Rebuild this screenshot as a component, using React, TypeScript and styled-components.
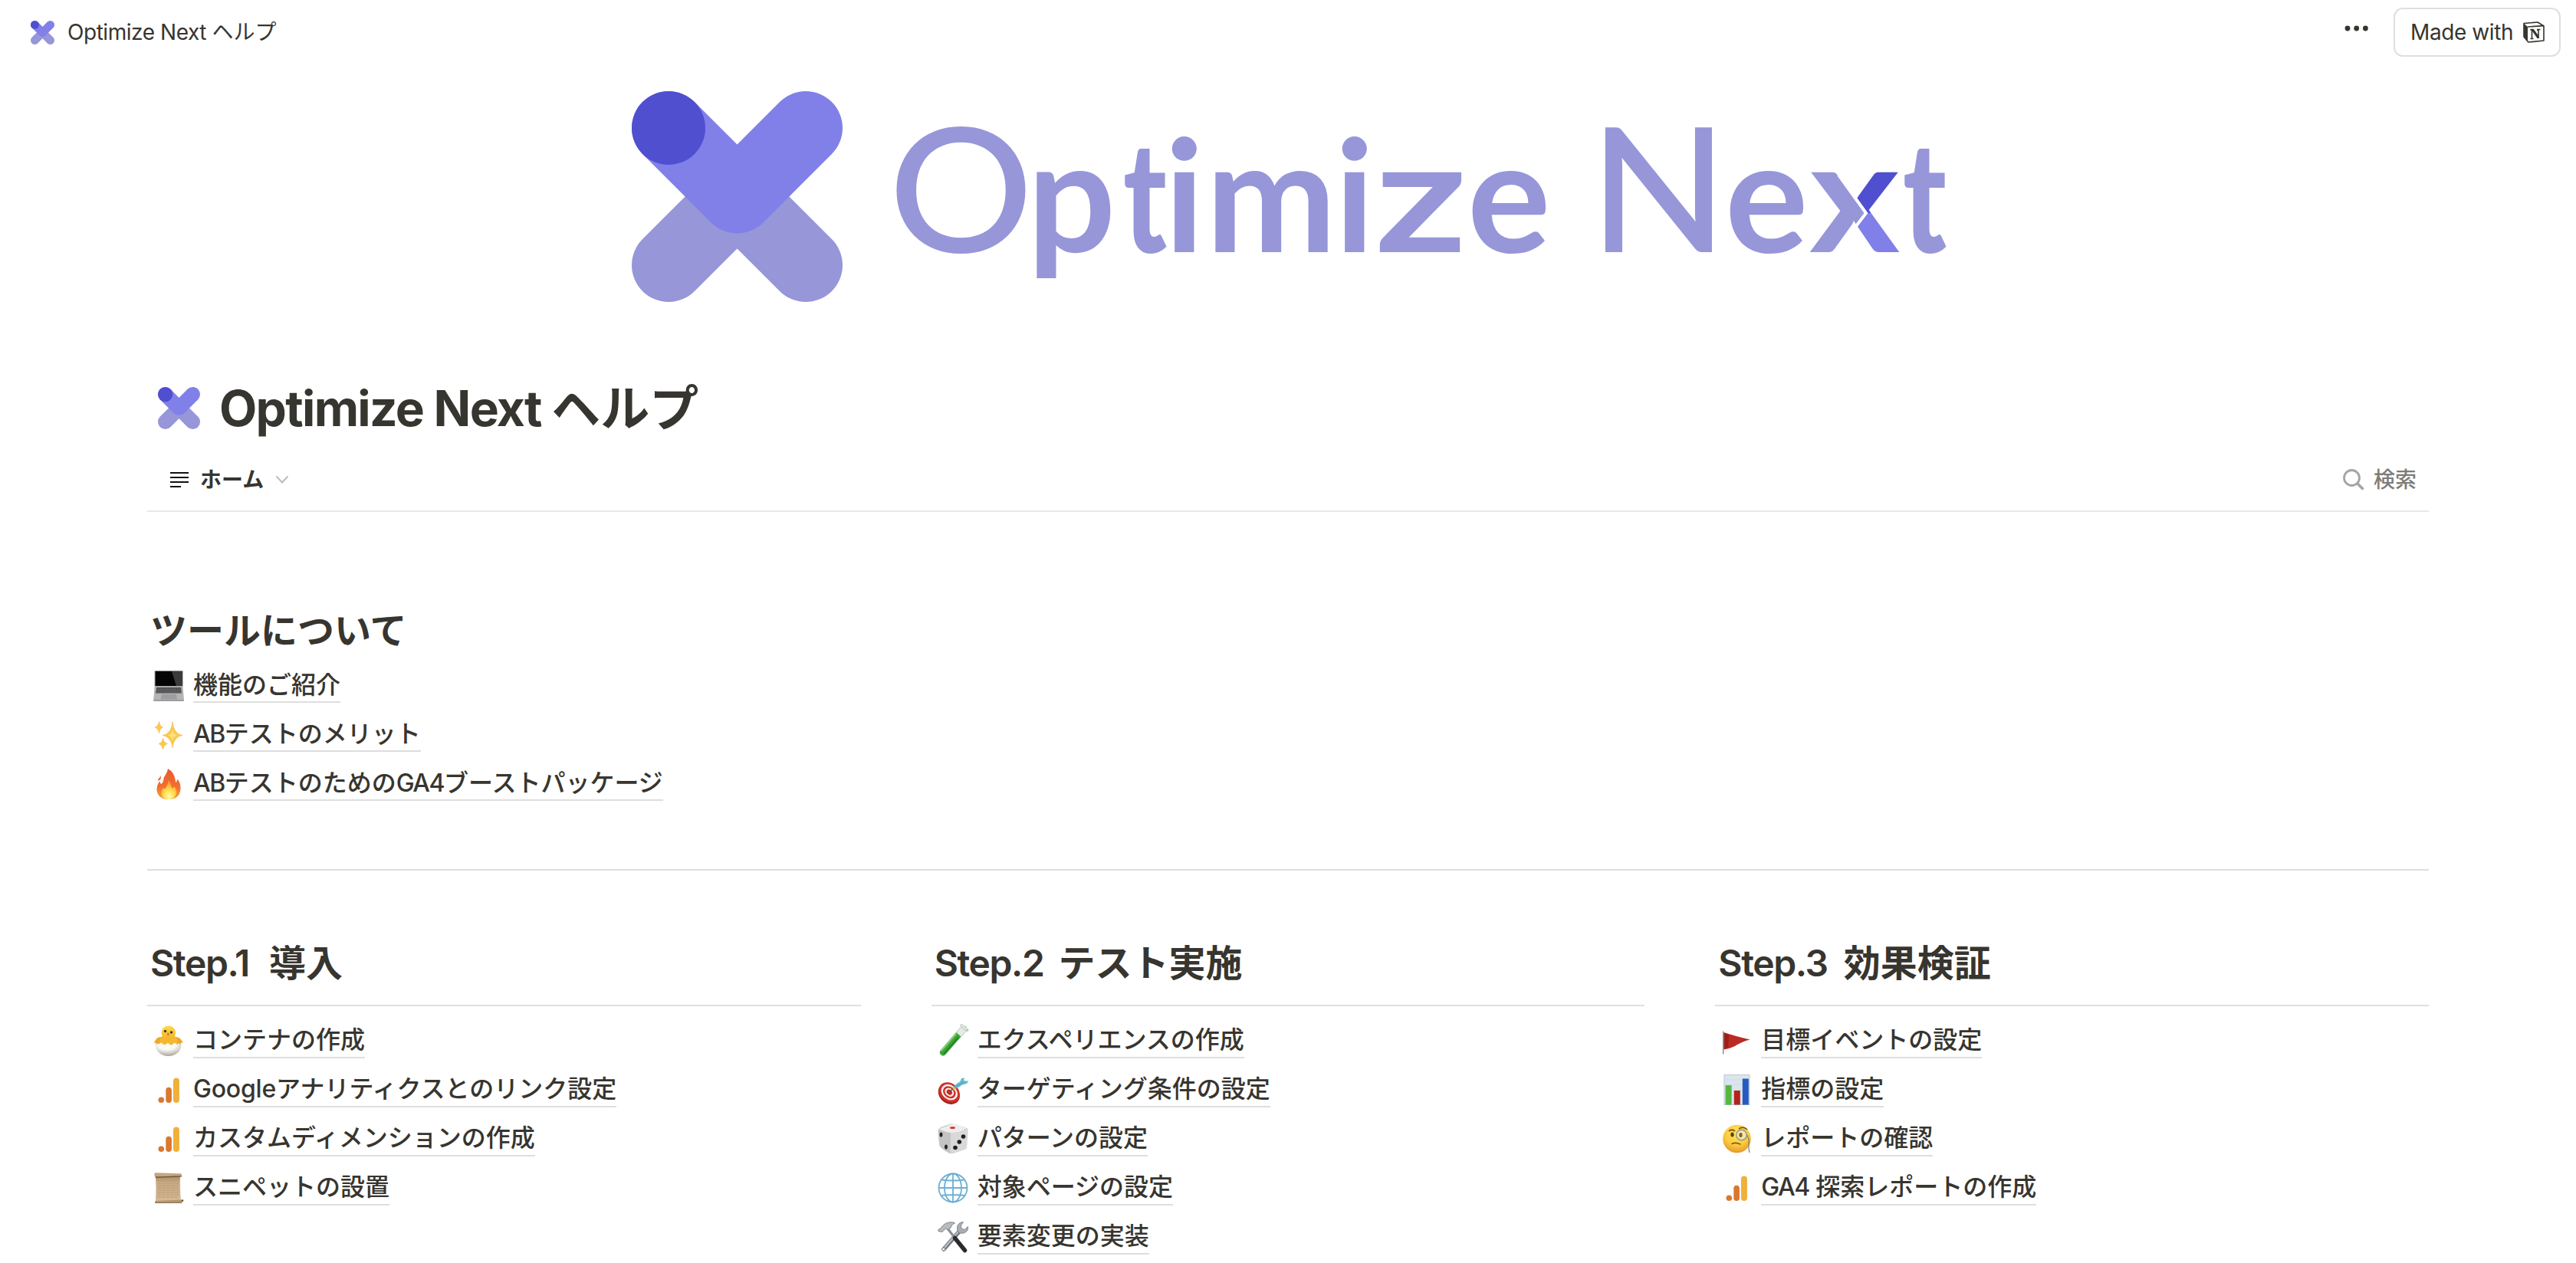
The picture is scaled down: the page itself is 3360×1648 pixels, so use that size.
import { ReactNode } from 'react'
import styled, { createGlobalStyle } from 'styled-components'

interface Item {
  icon: ReactNode,
  text: string
}

interface Step {
  title: string,
  label: string,
  gap: number,
  items: Item[]
}

const GlobalStyle = createGlobalStyle`
  body {
    margin: 0;
    background: #fff;
    color: #37352f;
    font-family: Inter, 'Noto Sans CJK JP', sans-serif;
    overflow: hidden;
  }
`

/* logos */

function LogoMark({ size }: { size: number }) {
  return (
    <svg width={size} height={size} viewBox="0 0 275 275">
      <LogoShapes />
    </svg>
  )
}

function LogoShapes() {
  return (
    <g fill="none" strokeWidth={96} strokeLinecap="round" strokeLinejoin="round">
      <path d="M48 227L137.5 137.5L227 227" stroke="#9696d9" />
      <path d="M48 48L137.5 137.5L227 48" stroke="#8080e8" />
      <circle cx={48} cy={48} r={48} fill="#4f4fd0" stroke="none" />
    </g>
  )
}

function Wordmark() {
  return (
    <WordSvg width={1712} height={330} viewBox="824 89 1712 330">
      <defs>
        <pattern id="split" patternUnits="userSpaceOnUse" x={2350} y={200} width={140} height={150}>
          <rect width={140} height={150} fill="#9696d9" />
          <path d="M48 28V0H140V78H84Z" fill="#4f4fd0" />
          <path d="M84 78H140V150H46V128Z" fill="#8080e8" />
          <path d="M48 28L84 78L46 128" fill="none" stroke="#fff" strokeWidth={4} />
        </pattern>
      </defs>
      <g transform="translate(824 119)">
        <LogoShapes />
      </g>
      <Word y={329}>
        <Cap x="1159" textLength={189} lengthAdjust="spacingAndGlyphs">O</Cap>
        <tspan x="1340">p</tspan>
        <Heavy x="1465" textLength={57} lengthAdjust="spacingAndGlyphs">t</Heavy>
        <tspan x="1519 1573 1741">imi</tspan>
        <tspan x="1793" textLength={121} lengthAdjust="spacingAndGlyphs">z</tspan>
        <tspan x="1914">e</tspan>
        <Cap x="2073" textLength={181} lengthAdjust="spacingAndGlyphs">N</Cap>
        <tspan x="2250">e</tspan>
        <tspan x="2360" textLength={118} lengthAdjust="spacingAndGlyphs" fill="url(#split)">x</tspan>
        <Heavy x="2482" textLength={57} lengthAdjust="spacingAndGlyphs">t</Heavy>
      </Word>
    </WordSvg>
  )
}

function NotionLogo() {
  return (
    <svg width={28} height={28} viewBox="0 0 28 28">
      <path d="M1 2.5L19 1L27 6V25L7 27L1 20Z" fill="#fff" stroke="#37352f" strokeWidth={1.6} strokeLinejoin="round" />
      <path d="M1 2.5L6 7V27L1 20Z" fill="#37352f" />
      <path d="M6 7L27 5.6" stroke="#37352f" strokeWidth={1.6} />
      <path d="M9.5 10.5H13L20 20V11.5L18 11M9.5 10.5L11.5 11.5V22M9.5 22.5H13.5M18 10.5H22.5" fill="none" stroke="#37352f" strokeWidth={1.6} />
      <path d="M11.5 10.5H14L20.8 20.5V22H18.5L11.5 12Z" fill="#37352f" />
    </svg>
  )
}

/* list icons */

function Laptop() {
  return (
    <Icon viewBox="0 0 40 40">
      <rect x={1.6} width={37} height={21} rx={1} fill="#8d8d8d" />
      <rect x={2.6} y={1} width={35} height={19} fill="#050505" />
      <path d="M24 1H37.6V20H30Z" fill="#3b3b3b" />
      <path d="M1.6 20.5H38.5L40 38.5Q40 40 38 40H2Q0 40 0.2 38.5Z" fill="#b4b4b6" />
      <path d="M4 22H36L37 29.5H3Z" fill="#4a4a4c" />
      <path d="M3.6 24H36.4M3.3 26H36.7M3 28H37" stroke="#929294" strokeWidth={0.6} strokeDasharray="2 0.7" />
      <path d="M11 31H30L31 37.5H10Z" fill="#9d9da0" />
      <path d="M0.3 39H39.7" stroke="#858587" />
    </Icon>
  )
}

function Sparkles() {
  return (
    <Icon viewBox="0 0 40 40">
      <g fill="#fbc94c" stroke="#eeb04c" strokeWidth={0.5}>
        <path d="M25 2.5Q26.5 18.5 38 20.5Q26.5 22.5 25 37Q23.5 22.5 12 20.5Q23.5 18.5 25 2.5Z" />
        <path d="M7.5 2Q8.3 8.5 12.5 10Q8.3 11.5 7.5 18Q6.7 11.5 2 10Q6.7 8.5 7.5 2Z" />
        <path d="M12.5 24Q13.5 30 18.5 31.5Q13.5 33 12.5 39Q11.5 33 7 31.5Q11.5 30 12.5 24Z" />
      </g>
      <path d="M25 12Q25.5 19 31 20.5Q25.5 22 25 28Q24.5 22 19 20.5Q24.5 19 25 12Z" fill="#ffe27b" />
    </Icon>
  )
}

function Fire() {
  return (
    <Icon viewBox="0 0 40 40">
      <defs>
        <linearGradient id="fire" x1="0" y1="0" x2="0" y2="1">
          <stop offset="0" stopColor="#e9582f" />
          <stop offset="0.6" stopColor="#f2702f" />
          <stop offset="1" stopColor="#f9a637" />
        </linearGradient>
        <radialGradient id="flame" cx="0.5" cy="0.85" r="0.7">
          <stop offset="0" stopColor="#fffcc0" />
          <stop offset="0.45" stopColor="#ffe14e" />
          <stop offset="1" stopColor="#fba63a" />
        </radialGradient>
      </defs>
      <path d="M19 0Q28 5 29 17Q30 19 31 15Q32 13 32 14Q36 20 35.5 27Q34 40 20 40Q6 40 4.5 28Q4 23 7 18Q8 16 8.5 17Q9 20 10.5 20Q14 16 13.5 12Q16 8 18 4Z" fill="url(#fire)" />
      <path d="M9.5 9Q10.5 12 9 14.5Q7 16 6 15Q6 13 8 12Z" fill="#ee6a35" />
      <path d="M20 15Q23 20 24 25Q25 27 27 23Q32 29 29.5 34Q27 40 20 40Q12 40 10.5 33Q10 29 12.5 25Q14 27 15.5 26Q19 21 20 15Z" fill="url(#flame)" />
    </Icon>
  )
}

function Chick() {
  return (
    <Icon viewBox="0 0 40 40">
      <defs>
        <radialGradient id="shell" cx="0.45" cy="0.2" r="0.8">
          <stop offset="0.4" stopColor="#fbfaf6" />
          <stop offset="1" stopColor="#aaa698" />
        </radialGradient>
        <linearGradient id="down" x1="0" y1="0" x2="0" y2="1">
          <stop offset="0" stopColor="#fddc48" />
          <stop offset="1" stopColor="#f3b02c" />
        </linearGradient>
      </defs>
      <path d="M11 15Q5 15 3 19L0.5 23L3.5 22.5L4 25L7 23.5L10 26L13 17Z" fill="#efa62a" />
      <path d="M28 15Q34 15 36.5 19L39 22.5L36 22.5L35.5 25L32.5 23.5L30 26L27 17Z" fill="#efa62a" />
      <path d="M11.5 14Q7 17 8 29H31.5Q33 17 28 14Z" fill="#f5b830" />
      <circle cx={19.800} cy={9.500} r={9.300} fill="url(#down)" />
      <path d="M2.5 23.5L6.5 25.5L10 22.5L14.5 25.5L19 23L23.5 26L27.500 22.500L31.500 25L36.500 23.500C37 33 30 40 19.500 40C9 40 2.500 33 2.500 23.500Z" fill="url(#shell)" />
      <circle cx={15.500} cy={7.500} r={1.700} fill="#3d3833" />
      <circle cx={23.500} cy={9} r={1.700} fill="#3d3833" />
      <path d="M17.500 11L19.300 9.200L21 11.500L19.200 14Z" fill="#e0752c" />
    </Icon>
  )
}

function Analytics() {
  return (
    <Icon viewBox="0 0 40 40">
      <circle cx={10.3} cy={33.2} r={3.8} fill="#d9782e" />
      <rect x={16.3} y={16.7} width={7.6} height={20.3} rx={3.8} fill="#d9782e" />
      <rect x={26} y={4.5} width={7.9} height={32.5} rx={3.9} fill="#efb03c" />
    </Icon>
  )
}

function Scroll() {
  return (
    <Icon viewBox="0 0 40 40">
      <defs>
        <linearGradient id="paper" x1="0" y1="0" x2="0" y2="1">
          <stop offset="0" stopColor="#a5865f" />
          <stop offset="0.25" stopColor="#c9ab86" />
          <stop offset="1" stopColor="#d6ba95" />
        </linearGradient>
      </defs>
      <path d="M3 4H35Q34.500 18 36 37H3Q4 20 3 4Z" fill="url(#paper)" />
      <path d="M6 11H33M5 14H33M6 17H32M5 20H32M5 23H33M5 26H33M5 29H33M5 32H32" stroke="#b59670" strokeWidth={0.8} strokeDasharray="5 0.8" />
      <path d="M1.500 1Q2 0 4 0.300L36 1.300Q37.500 2 37 4.500L3 5.500Q1 5 1.500 1Z" fill="#c5a67f" />
      <path d="M2 5.500L37 4.300V5.500L3 6.800Z" fill="#6d5238" />
      <path d="M2.500 37L38 35.500Q39 38 37 39.500L3 39.800Q1.500 38.500 2.500 37Z" fill="#b3946d" />
      <path d="M2 39.500H37" stroke="#7c6043" strokeWidth={0.800} />
      <circle cx={38} cy={36.500} r={1.300} fill="#6d5238" />
    </Icon>
  )
}

function TestTube() {
  return (
    <Icon viewBox="0 0 40 40">
      <g transform="rotate(41 20 20)">
        <rect x={16} y={-3} width={8.5} height={47} rx={4.2} fill="#e4eae5" stroke="#b2bab5" strokeWidth={0.8} />
        <path d="M16.3 9H24.2V40Q24 44 20.2 44Q16.5 44 16.3 40Z" fill="#3aa735" />
        <path d="M17.3 10V40" stroke="#86dd70" strokeWidth={1.4} />
        <path d="M22.5 12V41" stroke="#23802a" strokeWidth={2} />
        <rect x={14} y={-4} width={12.4} height={3} rx={1.5} fill="#e5e8e7" stroke="#a6aba8" strokeWidth={0.7} />
      </g>
      <circle cx={36.5} cy={1.5} r={1.3} fill="#b2e5ab" />
      <circle cx={38.5} cy={6} r={0.9} fill="#8fd38a" />
    </Icon>
  )
}

function Target() {
  return (
    <Icon viewBox="0 0 40 40">
      <g transform="rotate(40 14 24)">
        <ellipse cx={15.500} cy={24.500} rx={15.200} ry={12.300} fill="#9e2119" />
        <ellipse cx={14.500} cy={22.800} rx={14.800} ry={12} fill="#cf3129" />
        <ellipse cx={14.500} cy={22.500} rx={11.600} ry={9.300} fill="#f6efee" />
        <ellipse cx={14.500} cy={22.500} rx={9} ry={7.200} fill="#cb2e27" />
        <ellipse cx={14.500} cy={22.500} rx={6.500} ry={5.100} fill="#f6efee" />
        <ellipse cx={14.500} cy={22.500} rx={4} ry={3.100} fill="#c62c25" />
      </g>
      <path d="M16 22L22 17" stroke="#5a4a43" strokeWidth={1.3} />
      <path d="M19.500 16L22.500 20" stroke="#f0c94f" strokeWidth={2.400} />
      <path d="M21 18Q22 12.500 29 9.500L31 5L35 4.500L34 8.500L40.500 8.500L38 12L32 13.500Q27 18 21 18Z" fill="#66bdd0" />
      <path d="M23 16.500L36 8.500" stroke="#3798a8" strokeWidth={0.9} />
    </Icon>
  )
}

function Dice() {
  return (
    <Icon viewBox="0 0 40 40">
      <path d="M4 5Q19 -1 22 1L36 5Q40 6 39.5 10L38 30Q38 33 35 34L20 39Q17 40 14 38L4 31Q2 29 2 27L0.5 10Q0.5 7 4 5Z" fill="#c9c9c9" />
      <path d="M2 7L19 1Q21 0.5 23 1L38 6Q31 12 17 12Q7 10 2 7Z" fill="#eeeeee" />
      <path d="M17 12Q31 12 39 7L37.5 31Q37 33 35 34L19 39Q16 39 16 36Z" fill="#d9d9d9" />
      <path d="M1 8Q8 12 17 12L16.5 39Q5 34 3 29Z" fill="#c3c3c3" />
      <ellipse cx={19.500} cy={5.500} rx={3.5} ry={1.500} fill="#d8352b" />
      <g fill="#202020">
        <ellipse cx={4.500} cy={14.500} rx={1.900} ry={3.100} />
        <ellipse cx={11} cy={30.500} rx={1.900} ry={3.100} />
        <circle cx={33.500} cy={17} r={2.800} />
        <circle cx={28.300} cy={24} r={2.800} />
        <circle cx={23} cy={31.500} r={2.800} />
      </g>
    </Icon>
  )
}

function Globe() {
  return (
    <Icon viewBox="0 0 40 40">
      <g fill="none" stroke="#6db0d3" strokeWidth={1.800}>
        <circle cx={20} cy={20} r={18.500} />
        <ellipse cx={20} cy={20} rx={11} ry={18.500} />
        <path d="M20 1.500V38.500M1.500 20H38.500M5 9.500Q20 11.500 35 9.500M4.500 30Q20 28 35.500 30" />
      </g>
    </Icon>
  )
}

function Tools() {
  return (
    <Icon viewBox="0 0 40 40">
      <path d="M28 13L8 36" stroke="#73777c" strokeWidth={5.500} strokeLinecap="round" />
      <path d="M27.500 12.500L9 34" stroke="#b5bac0" strokeWidth={2.500} />
      <circle cx={7.800} cy={36} r={1.600} fill="#fff" />
      <path d="M33.500 0.500Q26.500 1 25.500 7Q25 13 29 15Q36 16.500 39.500 10.500V6.500L35 10.500L31 9L30.500 5Z" fill="#a9aeb4" stroke="#6c7075" strokeWidth={0.7} />
      <path d="M13 9L23 22" stroke="#8c9096" strokeWidth={3.200} />
      <path d="M22.500 21.500L35.500 37.500" stroke="#292b2d" strokeWidth={5.500} strokeLinecap="round" />
      <path d="M4 9Q8 2 15 1Q20 0 22.500 2Q17 4 17.500 7.500L13.500 11L10.500 9L6 13.500L1 12.500Q0 9.500 4 9Z" fill="#b7bbc0" stroke="#686c71" strokeWidth={0.8} />
    </Icon>
  )
}

function Flag() {
  return (
    <Icon viewBox="0 0 40 40">
      <path d="M3.5 9Q18 14 37.5 18.5Q25 22 18 27Q12 30 3.5 31.5Z" fill="#bb2a23" />
      <path d="M3.5 10Q8 12 10 12L9 29L3.5 31Z" fill="#9c1f19" />
      <path d="M2.7 7.5V37.5" stroke="#848484" strokeWidth={1.3} />
    </Icon>
  )
}

function BarChart() {
  return (
    <Icon viewBox="0 0 40 40">
      <rect x={4} y={0.5} width={33} height={39} fill="#dbe5ed" stroke="#bbc8d2" />
      <path d="M4 7H37M4 13H37M4 20H37M4 27H37M4 34H37" stroke="#cad7e0" strokeWidth={0.6} />
      <rect x={5.6} y={14} width={8} height={25.5} fill="#55b83e" />
      <rect x={16.8} y={21} width={8} height={18.5} fill="#b3231b" />
      <rect x={27.8} y={5.5} width={8} height={34} fill="#265ac0" />
    </Icon>
  )
}

function Monocle() {
  return (
    <Icon viewBox="0 0 40 40">
      <defs>
        <radialGradient id="face" cx="0.5" cy="0.3" r="0.7">
          <stop offset="0" stopColor="#ffe65c" />
          <stop offset="0.6" stopColor="#fbcb3d" />
          <stop offset="1" stopColor="#e8972d" />
        </radialGradient>
      </defs>
      <circle cx={20.5} cy={20} r={18.3} fill="url(#face)" />
      <ellipse cx={14.5} cy={14.5} rx={2.2} ry={3} fill="#663c1a" />
      <path d="M10 10Q14 6.5 18 10" fill="none" stroke="#855420" strokeWidth={1.7} />
      <path d="M23 7Q29 3 34 8" fill="none" stroke="#855420" strokeWidth={1.7} />
      <circle cx={26.5} cy={15} r={6.8} fill="#f5e6a5" stroke="#8e9893" strokeWidth={1.5} />
      <ellipse cx={25.5} cy={15} rx={2.1} ry={3} fill="#835f33" />
      <path d="M33.5 15Q37 20 36 27Q35.5 33 37 38" fill="none" stroke="#777b72" strokeWidth={1.2} />
      <path d="M14 26.5Q19 24 25 27" fill="none" stroke="#8a5722" strokeWidth={1.6} strokeLinecap="round" />
    </Icon>
  )
}

const tools: Item[] = [
  { icon: <Laptop />, text: '機能のご紹介' },
  { icon: <Sparkles />, text: 'ABテストのメリット' },
  { icon: <Fire />, text: 'ABテストのためのGA4ブーストパッケージ' }
]

const steps: Step[] = [
  {
    title: 'Step.1',
    label: '導入',
    gap: 26,
    items: [
      { icon: <Chick />, text: 'コンテナの作成' },
      { icon: <Analytics />, text: 'Googleアナリティクスとのリンク設定' },
      { icon: <Analytics />, text: 'カスタムディメンションの作成' },
      { icon: <Scroll />, text: 'スニペットの設置' }
    ]
  },
  {
    title: 'Step.2',
    label: 'テスト実施',
    gap: 19,
    items: [
      { icon: <TestTube />, text: 'エクスペリエンスの作成' },
      { icon: <Target />, text: 'ターゲティング条件の設定' },
      { icon: <Dice />, text: 'パターンの設定' },
      { icon: <Globe />, text: '対象ページの設定' },
      { icon: <Tools />, text: '要素変更の実装' }
    ]
  },
  {
    title: 'Step.3',
    label: '効果検証',
    gap: 21,
    items: [
      { icon: <Flag />, text: '目標イベントの設定' },
      { icon: <BarChart />, text: '指標の設定' },
      { icon: <Monocle />, text: 'レポートの確認' },
      { icon: <Analytics />, text: 'GA4 探索レポートの作成' }
    ]
  }
]

function LinkList({ items, gap }: { items: Item[], gap: number }) {
  return (
    <List>
      {items.map((item) => (
        <Row key={item.text}>
          {item.icon}
          <PageLink $gap={gap}>
            {item.text.split(/([A-Za-z0-9]+)/).map((part, i) => (
              i % 2 ? <Latin key={i} $caps={part === part.toUpperCase()}>{part}</Latin> : part
            ))}
          </PageLink>
        </Row>
      ))}
    </List>
  )
}

export default function App() {
  return (
    <>
      <GlobalStyle />
      <TopBar>
        <Crumb>
          <LogoMark size={31} />
          <CrumbText>Optimize Next <span>ヘルプ</span></CrumbText>
        </Crumb>
        <Actions>
          <svg width={32} height={10} viewBox="0 0 32 10" fill="#37352f">
            <circle cx={4} cy={5} r={3.4} />
            <circle cx={15.7} cy={5} r={3.4} />
            <circle cx={27.4} cy={5} r={3.4} />
          </svg>
          <MadeWith>
            Made with
            <NotionLogo />
          </MadeWith>
        </Actions>
      </TopBar>
      <Cover>
        <Wordmark />
      </Cover>
      <Main>
        <TitleRow>
          <LogoMark size={55} />
          <H1>Optimize Next <span>ヘルプ</span></H1>
        </TitleRow>
        <TabBar>
          <Tab>
            <svg width={24} height={22} viewBox="0 0 24 22" stroke="#111" strokeWidth={2.2}>
              <path d="M0 2H24M0 8H24M0 14H24M0 20H14" />
            </svg>
            <TabName>ホーム</TabName>
            <svg width={18} height={12} viewBox="0 0 18 12" fill="none" stroke="#bcbbb9" strokeWidth={2}>
              <path d="M1.5 1.5L9 9.5L16.5 1.5" />
            </svg>
          </Tab>
          <Search>
            <svg width={28} height={28} viewBox="0 0 28 28" fill="none" stroke="#a5a4a1" strokeWidth={2.8}>
              <circle cx={11.5} cy={11.5} r={10} />
              <path d="M18.5 18.5L26.5 26.5" strokeWidth={3.6} />
            </svg>
            検索
          </Search>
        </TabBar>
        <Section>
          <H2>ツールについて</H2>
          <LinkList items={tools} gap={2} />
        </Section>
        <Divider />
        <Columns>
          {steps.map((step) => (
            <Column key={step.title}>
              <StepTitle>
                <StepName $gap={step.gap}>{step.title}</StepName>
                {step.label}
              </StepTitle>
              <LinkList items={step.items} gap={3} />
            </Column>
          ))}
        </Columns>
      </Main>
    </>
  )
}

const WordSvg = styled.svg`
  overflow: visible;
`

const Word = styled.text`
  font-family: Lato, sans-serif;
  font-size: 203px;
  font-weight: 700;
  fill: #9696d9;
`

const Cap = styled.tspan`
  font-size: 226px;
  font-weight: 500;
`

const Heavy = styled.tspan`
  font-weight: 900;
`

const Icon = styled.svg`
  flex: none;
  width: 40px;
  height: 40px;
  overflow: visible;
`

const TopBar = styled.header`
  box-sizing: border-box;
  display: flex;
  align-items: center;
  justify-content: space-between;
  height: 84px;
  padding: 0 20px 0 40px;
`

const Crumb = styled.div`
  display: flex;
  align-items: center;
  gap: 17px;
`

const CrumbText = styled.span`
  font-size: 28px;
  line-height: 40px;
  letter-spacing: -0.45px;
  span {
    letter-spacing: 0;
  }
`

const Actions = styled.div`
  display: flex;
  align-items: center;
  gap: 32px;
  > svg {
    margin-bottom: 10px;
  }
`

const MadeWith = styled.button`
  box-sizing: border-box;
  display: flex;
  align-items: center;
  justify-content: space-between;
  width: 218px;
  height: 64px;
  padding: 0 19px 0 20px;
  border: 2px solid #dfdfde;
  border-radius: 12px;
  background: #fff;
  color: #37352f;
  font-family: inherit;
  font-size: 28px;
  letter-spacing: -0.4px;
`

const Cover = styled.div`
  box-sizing: border-box;
  display: flex;
  justify-content: center;
  height: 396px;
  padding-top: 5px;
`

const Main = styled.main`
  padding: 0 192px;
`

const TitleRow = styled.div`
  display: flex;
  align-items: center;
  gap: 25px;
  height: 104px;
  padding-left: 14px;
`

const H1 = styled.h1`
  margin: 0;
  padding-top: 2px;
  font-size: 64px;
  font-weight: 700;
  line-height: 76px;
  letter-spacing: -1.7px;
  span {
    letter-spacing: 0;
  }
`

const TabBar = styled.div`
  box-sizing: border-box;
  display: flex;
  align-items: center;
  justify-content: space-between;
  height: 84px;
  padding: 2px 16px 0 30px;
  border-bottom: 2px solid #e9e9e8;
`

const Tab = styled.div`
  display: flex;
  align-items: center;
  gap: 15px;
`

const TabName = styled.span`
  font-size: 28px;
  font-weight: 600;
  line-height: 40px;
`

const Search = styled.div`
  display: flex;
  align-items: center;
  gap: 12px;
  color: #7d7c78;
  font-size: 28px;
  font-weight: 500;
  line-height: 40px;
`

const Section = styled.section`
  padding: 123px 4px 0;
`

const H2 = styled.h2`
  margin: 0;
  font-size: 48px;
  font-weight: 600;
  line-height: 64px;
`

const StepTitle = styled(H2)`
  padding: 1px 4px 22px;
  margin-bottom: 13px;
  border-bottom: 2px solid #dfdfde;
  white-space: pre;
`

const StepName = styled.span<{ $gap: number }>`
  margin-right: ${({ $gap }) => $gap}px;
  letter-spacing: -1.4px;
`

const List = styled.div`
  display: flex;
  flex-direction: column;
`

const Row = styled.div`
  box-sizing: border-box;
  display: flex;
  align-items: flex-start;
  gap: 12px;
  height: 64px;
  padding: 12px 0 0 8px;
  ${Section} & {
    padding-left: 4px;
  }
  ${Section} &:first-child {
    margin-top: 8px;
  }
`

const PageLink = styled.a<{ $gap: number }>`
  font-size: 32px;
  font-weight: 500;
  line-height: 38px;
  padding-bottom: ${({ $gap }) => $gap}px;
  border-bottom: 2px solid #dededd;
  white-space: nowrap;
`

const Latin = styled.span<{ $caps: boolean }>`
  letter-spacing: ${({ $caps }) => ($caps ? -1.5 : -0.2)}px;
`

const Divider = styled.hr`
  height: 2px;
  margin: 79px 0 0;
  border: 0;
  background: #dededd;
`

const Columns = styled.div`
  display: grid;
  grid-template-columns: repeat(3, 1fr);
  gap: 92px;
  margin-top: 88px;
`

const Column = styled.div`
  min-width: 0;
`
